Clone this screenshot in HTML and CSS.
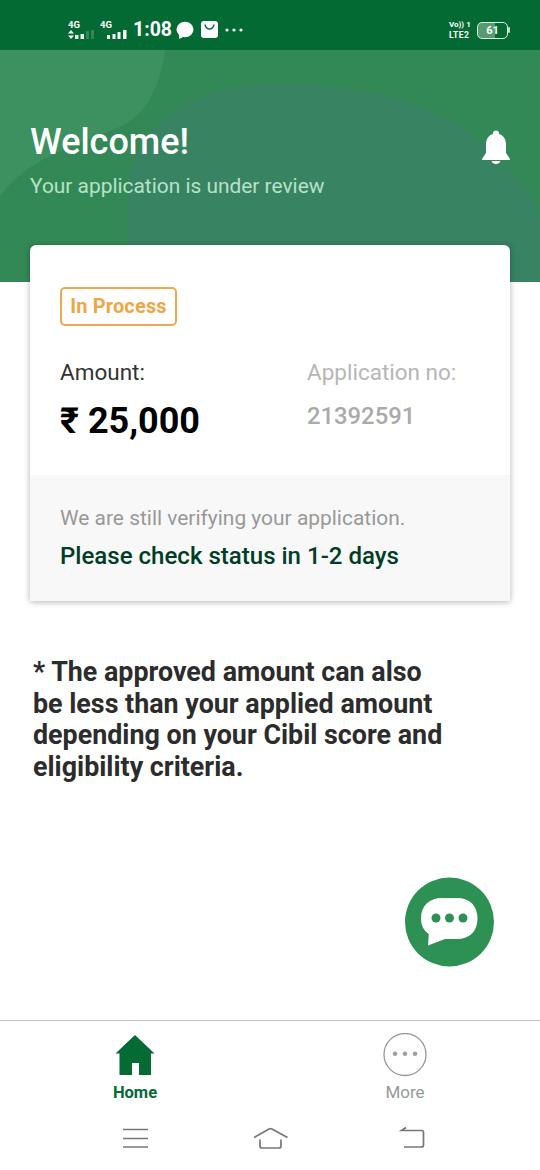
FILE: index.html
```html
<!DOCTYPE html>
<html lang="en">
<head>
<meta charset="utf-8">
<meta name="viewport" content="width=device-width">
<title>Application status</title>
<link rel="stylesheet" href="styles.css">
</head>
<body>
<div class="screen">
  <header class="status-bar">
    <div class="signal signal-first"><span class="network">4G</span>
      <svg width="28" height="9" viewBox="0 0 28 9"><path d="M0 3.500 3 0l3 3.500zM0 5.500h6L3 9z" fill="#fff"/><path d="M7 5h3.500v4H7zM12.500 4h3.500v5h-3.500z" fill="#e6f5ea"/><path d="M18 1h3v8h-3zM23 0h3v9h-3z" fill="#378456"/></svg>
    </div>
    <div class="signal signal-second"><span class="network">4G</span>
      <svg width="28" height="9" viewBox="0 0 28 9"><path d="M7 5h3v4H7zM12.500 4h3v5h-3zM17.500 2h3v7h-3zM23 0h3.500v9H23z" fill="#fff"/></svg>
    </div>
    <span class="clock">1:08</span>
    <svg class="status-chat" width="18" height="18" viewBox="0 0 18 18"><ellipse cx="9" cy="8.500" rx="8.500" ry="7.700" fill="#fff"/><path d="M3 13v5l6-3z" fill="#fff"/></svg>
    <svg class="status-bag" width="17" height="18" viewBox="0 0 17 18"><rect width="17" height="17" rx="3" fill="#fff"/><path d="M4 3.500Q5 8 8.500 8T13 3.500" fill="none" stroke="#187039" stroke-width="1.500"/></svg>
    <svg class="status-dots" width="18" height="4" viewBox="0 0 18 4" fill="#fff"><circle cx="2" cy="2" r="1.600"/><circle cx="9" cy="2" r="1.600"/><circle cx="16" cy="2" r="1.600"/></svg>
    <div class="volte"><span>Vo)) 1</span><span class="lte">LTE2</span></div>
    <div class="battery"><span>61</span></div>
  </header>
  <section class="hero">
    <svg class="hero-shapes" viewBox="0 0 540 232" preserveAspectRatio="none"><path d="M0 0H165C160 34 150 60 122 76 70 98 28 108 0 146z" fill="#3d905f"/><path d="M128 232V150C127 86 180 34 280 34c138 0 222 50 260 131v67z" fill="#378362"/></svg>
    <div class="greeting"><h1>Welcome!</h1><p>Your application is under review</p></div>
    <svg class="bell" width="28" height="34" viewBox="0 0 28 34" fill="#fff"><path d="M11 3.500a3 3 0 0 1 6 0v.6c4.500 1.200 7 5.300 7 10.400v8.500L28 29v1H0v-1l4-6v-8.500C4 9.400 6.500 5.300 11 4.100zM9.500 31h9c-.7 2-2.300 3-4.500 3s-3.800-1-4.500-3z"/></svg>
  </section>
  <main class="content">
    <article class="card">
      <div class="card-main">
        <span class="badge">In Process</span>
        <div class="facts">
          <div class="fact"><span class="label">Amount:</span><strong class="amount">₹ 25,000</strong></div>
          <div class="fact muted"><span class="label">Application no:</span><span class="app-number">21392591</span></div>
        </div>
      </div>
      <div class="card-note"><p class="verifying">We are still verifying your application.</p><p class="check">Please check status in 1-2 days</p></div>
    </article>
    <p class="disclaimer">* The approved amount can also<br>be less than your applied amount<br>depending on your Cibil score and<br>eligibility criteria.</p>
  </main>
  <button class="chat-button" aria-label="Chat"><svg width="90" height="90" viewBox="0 0 90 90"><circle cx="45.500" cy="45" r="44.500" fill="#2c9153"/><path d="M38 21h15c13 0 20.500 8 20.500 20.500S66 62 53 62H41l-17 6.500.8-11.500C19.500 53.500 17 48 17 41.500 17 29 25 21 38 21z" fill="#fff"/><g fill="#2c9153"><circle cx="32" cy="41" r="4.500"/><circle cx="45.500" cy="41" r="4.500"/><circle cx="59" cy="41" r="4.500"/></g></svg></button>
  <nav class="tabs">
    <a class="tab active"><svg width="40" height="44" viewBox="0 0 40 44" fill="#036b33"><path d="M20 2 39.500 20.500H36V42H24V30h-7v12H4.500V20.500H.5z"/></svg><span>Home</span></a>
    <a class="tab"><svg width="44" height="44" viewBox="0 0 44 44"><circle cx="22" cy="21.500" r="21" fill="none" stroke="#979797" stroke-width="1.300"/><g fill="#a0a0a0"><circle cx="12" cy="20.800" r="2.300"/><circle cx="22" cy="20.800" r="2.300"/><circle cx="32" cy="20.800" r="2.300"/></g></svg><span>More</span></a>
  </nav>
  <footer class="system-nav">
    <svg width="36" height="24" viewBox="0 0 36 24"><path d="M6 3.500h25M6 12.500h25M6 21h25"/></svg>
    <svg width="36" height="24" viewBox="0 0 36 24"><path d="M0 11.500 15 3q1.500-.7 3 0L33.500 11.500M6 13.500v6.500q0 2 2 2h17q2 0 2-2v-6.500"/></svg>
    <svg width="36" height="24" viewBox="0 0 36 24"><path d="M16 1.500 11.500 4.500h20q2 0 2 2v12.500q0 2-2 2H14"/></svg>
  </footer>
</div>
</body>
</html>
```

FILE: styles.css
```css
* { box-sizing: border-box; }
body { margin: 0; background: #fff; font-family: Roboto, "Liberation Sans", sans-serif; }
h1, p { margin: 0; }
svg { display: block; flex-shrink: 0; }
.screen { position: relative; width: 540px; height: 1170px; display: flex; flex-direction: column; overflow: hidden; }
.status-bar { height: 50px; flex-shrink: 0; background: #026a32; color: #fff; display: flex; align-items: center; padding: 10px 32px 0 68px; }
.signal { display: flex; flex-direction: column; width: 28px; height: 20px; }
.signal-second { margin-left: 4px; }
.network { font-size: 9.500px; line-height: 10px; font-weight: 700; }
.clock { font-size: 19.500px; line-height: 22px; font-weight: 700; margin-left: 5px; width: 38px; white-space: nowrap; }
.status-chat { margin-left: 5px; }
.status-bag { margin-left: 7px; }
.status-dots { margin-left: 7px; }
.volte { margin-left: auto; display: flex; flex-direction: column; width: 23px; font-size: 8px; line-height: 10px; font-weight: 700; white-space: nowrap; }
.lte { font-size: 8.500px; letter-spacing: .4px; }
.battery { position: relative; margin-left: 5px; width: 31px; height: 17px; border: 1.500px solid #d9f4e0; border-radius: 5px; background: linear-gradient(90deg, #579b71 59%, transparent 59%); font-size: 11px; line-height: 15px; font-weight: 700; text-align: center; }
.battery::after { content: ""; position: absolute; left: 30px; top: 4px; width: 2px; height: 6px; background: #b9dec4; border-radius: 1px; }
.hero { position: relative; height: 232px; flex-shrink: 0; background: #338955; display: flex; justify-content: space-between; padding: 71px 30px 0; color: #fff; }
.hero-shapes { position: absolute; inset: 0; width: 540px; height: 232px; }
.greeting { position: relative; }
.greeting h1 { font-size: 36px; line-height: 42px; font-weight: 500; }
.greeting p { margin-top: 11px; font-size: 20.900px; line-height: 24px; color: #b7e2c9; }
.bell { position: relative; margin-top: 9px; }
.content { position: relative; padding: 0 30px; }
.card { margin-top: -37px; height: 356px; background: #fff; border-radius: 6px 6px 2px 2px; overflow: hidden; box-shadow: 0 1px 6px rgba(0,0,0,.3); display: flex; flex-direction: column; }
.card-main { height: 230px; padding: 42px 30px 0; display: flex; flex-direction: column; align-items: flex-start; }
.badge { width: 117px; height: 39px; border: 2px solid #ecaa4d; border-radius: 5px; color: #eda747; font-size: 20px; line-height: 35px; font-weight: 700; text-align: center; white-space: nowrap; letter-spacing: .15px; }
.facts { display: grid; grid-template-columns: 247px 1fr; margin-top: 33px; }
.fact { display: flex; flex-direction: column; white-space: nowrap; }
.label { font-size: 22.500px; line-height: 27px; color: #333; }
.amount { margin-top: 14px; font-size: 36px; line-height: 42px; color: #000; }
.muted .label { color: #b6b6b6; }
.app-number { margin-top: 16px; font-size: 23.800px; line-height: 28px; font-weight: 500; color: #aaa; }
.card-note { flex: 1; background: #f8f8f8; padding: 30px 30px 0; white-space: nowrap; }
.verifying { font-size: 20.950px; line-height: 26px; color: #989898; }
.check { margin-top: 11px; font-size: 24.050px; line-height: 29px; font-weight: 500; color: #003d25; }
.disclaimer { margin: 56px 0 0 3px; font-size: 26.850px; line-height: 31.500px; font-weight: 700; color: #2c2c2c; white-space: nowrap; }
.chat-button { position: absolute; left: 404px; top: 877px; width: 90px; height: 90px; padding: 0; border: 0; background: none; }
.tabs { margin-top: auto; height: 88px; flex-shrink: 0; border-top: 1px solid #bdbdbd; display: grid; grid-template-columns: 1fr 1fr; padding-top: 12px; }
.tab { display: flex; flex-direction: column; align-items: center; color: #999; font-size: 17px; line-height: 22px; }
.tab span { margin-top: 4px; }
.tab.active { color: #036b33; font-size: 16.500px; font-weight: 700; }
.tab.active span { margin-top: 5px; }
.system-nav { height: 62px; flex-shrink: 0; display: flex; justify-content: space-between; padding: 18px 114px 0 117px; }
.system-nav svg { fill: none; stroke: #777; stroke-width: 1.700; }
```
